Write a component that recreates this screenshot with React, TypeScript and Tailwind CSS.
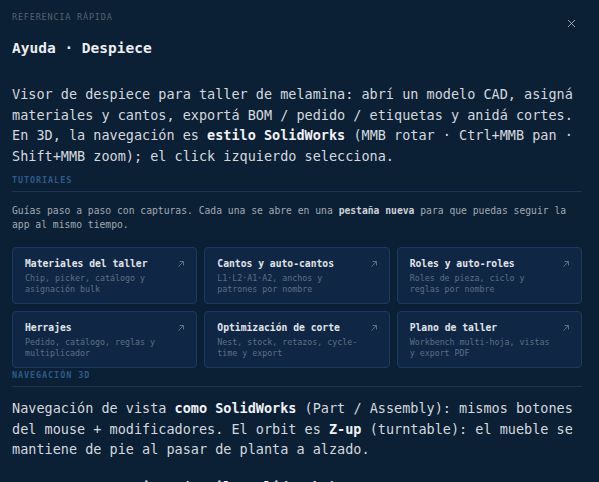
import { X } from 'lucide-react'

const MONO = { fontFamily: '"DejaVu Sans Mono", "Liberation Mono", monospace' }

interface Tutorial { title: string; desc: string }

const TUTORIALS: Tutorial[] = [
  { title: 'Materiales del taller', desc: 'Chip, picker, catálogo y asignación bulk' },
  { title: 'Cantos y auto-cantos', desc: 'L1·L2·A1·A2, anchos y patrones por nombre' },
  { title: 'Roles y auto-roles', desc: 'Roles de pieza, ciclo y reglas por nombre' },
  { title: 'Herrajes', desc: 'Pedido, catálogo, reglas y multiplicador' },
  { title: 'Optimización de corte', desc: 'Nest, stock, retazos, cycle-time y export' },
  { title: 'Plano de taller', desc: 'Workbench multi-hoja, vistas y export PDF' },
]

function SectionLabel({ children, className = '' }: { children: string; className?: string }) {
  return (
    <div className={`border-b border-[#1a3453] pb-[6px] ${className}`}>
      <div className="text-[8.5px] leading-[10px] tracking-[0.9px] text-[#2d5a8a] font-bold">{children}</div>
    </div>
  )
}

function TutorialCard({ t }: { t: Tutorial }) {
  return (
    <a
      href="#"
      className="relative block h-[57px] rounded-[4px] border border-[#1c3a5e] bg-[#0f2745] pl-[12px] pt-[10px]"
    >
      <div className="text-[9.7px] leading-[12px] text-[#e2e5e8] font-semibold">{t.title}</div>
      <div className="mt-[3px] w-[145px] text-[8.3px] leading-[11px] text-[#5f6e80]">{t.desc}</div>
      <svg
        className="absolute right-[11px] top-[12px]"
        width="8"
        height="8"
        viewBox="0 0 8 8"
        fill="none"
        stroke="#5e6d80"
        strokeWidth="1"
      >
        <path d="M1.5 6.5 L6.5 1.5 M2.5 1.5 H6.5 V5.5" />
      </svg>
    </a>
  )
}

export default function App() {
  return (
    <div className="min-h-screen overflow-hidden bg-[#0b1f35] pl-3 pr-[17px] text-[#d5d9de]" style={MONO}>
      {/* Header */}
      <div className="relative pt-[12px]">
        <div className="text-[8.5px] leading-[10px] tracking-[0.8px] text-[#56616f]">REFERENCIA RÁPIDA</div>
        <h1 className="mt-[16px] text-[14.5px] leading-[20px] font-bold text-[#eceef0]">Ayuda · Despiece</h1>
        <button className="absolute right-[4px] top-[17px] text-[#b9bdc1]">
          <X size={13} strokeWidth={1.6} />
        </button>
      </div>

      <p className="mt-[26px] text-[13.5px] leading-[20.5px]">
        Visor de despiece para taller de melamina: abrí un modelo CAD, asigná materiales y cantos, exportá BOM / pedido /
        etiquetas y anidá cortes. En 3D, la navegación es{' '}
        <b className="text-[#f0f2f4]">estilo SolidWorks</b> (MMB rotar · Ctrl+MMB pan · Shift+MMB zoom); el click
        izquierdo selecciona.
      </p>

      {/* Tutoriales */}
      <SectionLabel className="mt-[9px]">TUTORIALES</SectionLabel>
      <p className="mt-[12px] text-[9.7px] leading-[14px] text-[#a3aab3]">
        Guías paso a paso con capturas. Cada una se abre en una{' '}
        <b className="text-[#cdd1d6]">pestaña nueva</b> para que puedas seguir la app al mismo tiempo.
      </p>
      <div className="mt-[15px] grid grid-cols-3 gap-[7px]">
        {TUTORIALS.map(t => (
          <TutorialCard key={t.title} t={t} />
        ))}
      </div>

      {/* Navegación 3D */}
      <SectionLabel className="mt-[2px]">NAVEGACIÓN 3D</SectionLabel>
      <p className="mt-[11px] text-[13.5px] leading-[20.5px]">
        Navegación de vista <b className="text-[#f0f2f4]">como SolidWorks</b> (Part / Assembly): mismos botones del
        mouse + modificadores. El orbit es <b className="text-[#f0f2f4]">Z-up</b> (turntable): el mueble se mantiene de
        pie al pasar de planta a alzado.
      </p>
      <p className="mt-[17px] pl-[8px] text-[13.5px] leading-[20.5px] font-bold text-[#eceef0]">
        Mapeo mouse → vista (estilo SolidWorks)
      </p>
    </div>
  )
}
